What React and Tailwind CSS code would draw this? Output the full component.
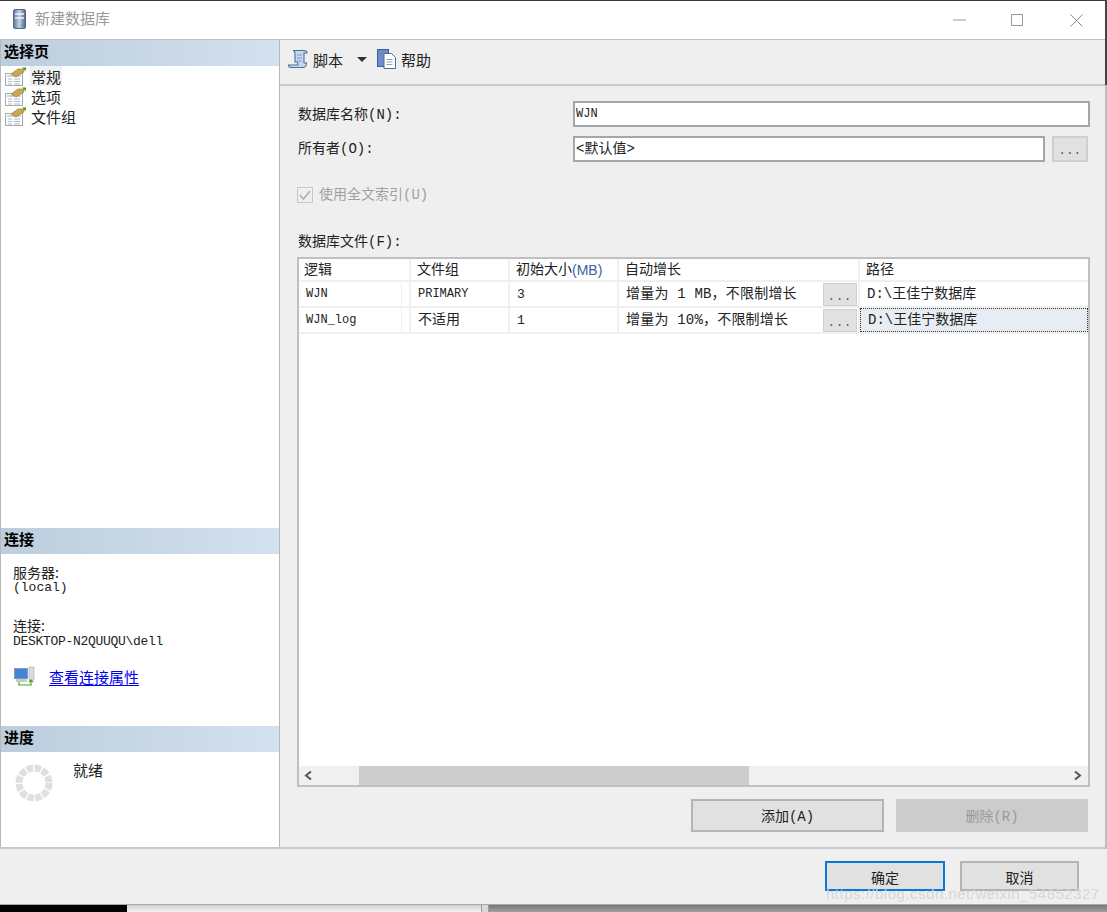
import React from "react";

const cjk = "font-['Liberation_Mono','Noto_Sans_CJK_SC',monospace]";

function PageIcon() {
  return (
    <svg width="21" height="19" viewBox="0 0 21 19" className="shrink-0">
      <rect x="0.5" y="6.5" width="17" height="12" fill="#fff" stroke="#a9a9a9" />
      <rect x="2" y="8" width="14" height="2" fill="#c4d2e8" />
      <path d="M3 12h4M9 12h6M3 14.5h4M9 14.5h6M3 17h4M9 17h6" stroke="#aab8cc" />
      <path d="M6 7 L13 2 L19 2 L19 5 L11 10 Z" fill="#c9a94a" stroke="#8c7a35" strokeWidth="0.6" />
      <path d="M17 0.5h4v3.500z" fill="#3a9b35" />
    </svg>
  );
}

function SectionHeader({ children }) {
  return (
    <div className="h-[26px] shrink-0 pl-[3px] pb-[6px] flex items-center bg-gradient-to-r from-[#bccddd] to-[#d4e1ee] text-[15px] leading-none font-bold text-black font-['Noto_Sans_CJK_SC',sans-serif]">
      {children}
    </div>
  );
}

function Spinner() {
  return (
    <svg width="38" height="38" viewBox="0 0 38 38" className="shrink-0">
      <circle cx="19" cy="19" r="15" fill="none" stroke="#e0e0e0" strokeWidth="7" strokeDasharray="6.4 1.454" />
    </svg>
  );
}

function Cell({ w, className = "", children }) {
  return <div className={`shrink-0 flex items-center border-r-2 border-[#f0f0f0] ${className}`} style={{ width: w }}>{children}</div>;
}

const colW = [112, 99, 109, 241, 231];

function Row({ name, group, size, growth, highlighted }) {
  return (
    <div className="flex h-[26px] border-b-2 border-[#f0f0f0] text-[14px] leading-none text-[#222]">
      <Cell w={colW[0]} className="pl-[7px] relative">
        <span className="text-[12px]">{name}</span>
        <span className="absolute right-[7px] top-0 bottom-0 w-px bg-[#f0f0f0]" />
      </Cell>
      <Cell w={colW[1]} className="pl-[7px]"><span className={group === "PRIMARY" ? "text-[12px]" : ""}>{group}</span></Cell>
      <Cell w={colW[2]} className="pl-[7px]"><span className="text-[13px]">{size}</span></Cell>
      <Cell w={colW[3]} className="pl-[7px] justify-between pr-[1px]">
        <span className="whitespace-nowrap text-[14px] tracking-[0.2px]">{growth}</span>
        <span className="w-[34px] h-[23px] bg-[#e1e1e1] border border-[#cfcfcf] flex items-end justify-center pb-[2px] text-[12px] tracking-[1px] leading-none text-[#555]">...</span>
      </Cell>
      <div
        className={`flex-1 flex items-center pl-[7px] ${highlighted ? "bg-[#e7edf3] border border-dotted border-[#333]" : ""}`}
      >
        <span className="whitespace-nowrap">D:\王佳宁数据库</span>
      </div>
    </div>
  );
}

export default function App() {
  return (
    <div className={`relative w-[1107px] h-[912px] overflow-hidden bg-[#efefef] flex flex-col ${cjk}`}>
      <div className="h-px shrink-0 bg-[#3a3a3a]" />
      {/* title bar */}
      <div className="h-[38px] shrink-0 bg-white flex items-center pl-[13px] border-b border-[#c0c0c0] box-content">
        <svg width="13" height="20" viewBox="0 0 13 20" className="shrink-0 mb-[2px]">
          <defs>
            <linearGradient id="db" x1="0" x2="1" y1="0" y2="0">
              <stop offset="0" stopColor="#5f7499" />
              <stop offset="0.5" stopColor="#c5d2e6" />
              <stop offset="1" stopColor="#4e6185" />
            </linearGradient>
          </defs>
          <rect x="0.5" y="0.5" width="12" height="19" rx="1.5" fill="url(#db)" stroke="#56688a" />
          <path d="M2 5h9M2 9h9" stroke="#eef3fb" strokeWidth="1.4" />
          <rect x="8" y="15" width="2" height="2" fill="#5fb35f" />
        </svg>
        <span className="ml-[9px] pb-[6px] text-[15px] leading-none text-[#999] font-['Noto_Sans_CJK_SC',sans-serif]">新建数据库</span>
        <div className="ml-auto flex items-center pr-[24px]">
          <svg width="13" height="2" viewBox="0 0 13 2" className="mr-[45px] -mt-[1px]"><path d="M0 1h13" stroke="#9a9a9a" /></svg>
          <svg width="12" height="12" viewBox="0 0 12 12" className="mr-[47px]"><rect x="0.5" y="0.5" width="11" height="11" fill="none" stroke="#999" /></svg>
          <svg width="13" height="13" viewBox="0 0 13 13"><path d="M0.5 0.5l12 12M12.5 0.5l-12 12" stroke="#8a8a8a" /></svg>
        </div>
      </div>

      {/* main */}
      <div className="flex h-[809px] shrink-0 border-b-2 border-[#c8c8d0]">
        {/* left */}
        <aside className="w-[280px] shrink-0 flex flex-col bg-white border-r border-l border-[#b8b8b8] font-['Noto_Sans_CJK_SC',sans-serif] text-[#222]">
          <SectionHeader>选择页</SectionHeader>
          <div className="h-[462px] shrink-0 pl-[4px] flex flex-col text-[15px] leading-none">
            {["常规", "选项", "文件组"].map((t, i) => (
              <div key={t} className="h-[20px] flex items-center gap-[4px]">
                <PageIcon />
                <span className={i === 0 ? "bg-[#f0f0f0] h-[20px] px-[1px] flex items-center" : "px-[1px]"}>{t}</span>
              </div>
            ))}
          </div>
          <SectionHeader>连接</SectionHeader>
          <div className="h-[172px] shrink-0 pl-[12px] pt-[11px] flex flex-col text-[14px] leading-none">
            <span className="h-[15px]">服务器:</span>
            <span className="text-[13px] font-['Liberation_Mono',monospace] mt-[1px]">(local)</span>
            <span className="mt-[24px] h-[15px]">连接:</span>
            <span className="text-[13px] mt-[2px] font-['Liberation_Mono',monospace] tracking-[-0.3px]">DESKTOP-N2QUUQU\dell</span>
            <div className="flex items-center mt-[18px] pl-[1px]">
              <svg width="21" height="20" viewBox="0 0 21 20" className="shrink-0">
                <rect x="0.5" y="2.5" width="13" height="10" fill="#3f86d6" stroke="#8a9bb0" />
                <rect x="2" y="13" width="11" height="3" fill="#c5cbd3" />
                <rect x="15" y="1" width="5" height="13" fill="#d9dde3" stroke="#a4abb5" strokeWidth="0.6" />
                <path d="M5 16v3h12v-5M15 16l2-2 2 2" fill="none" stroke="#3faa1d" strokeWidth="1.2" />
              </svg>
              <a href="#" className="ml-[14px] text-[15px] text-[#0000ee] underline underline-offset-2">查看连接属性</a>
            </div>
          </div>
          <SectionHeader>进度</SectionHeader>
          <div className="flex-1 pl-[14px] pt-[12px] flex items-start">
            <Spinner />
            <span className="ml-[20px] text-[15px] leading-none -mt-[2px]">就绪</span>
          </div>
        </aside>

        {/* right */}
        <main className="flex-1 min-w-0 flex flex-col">
          <div className="h-[46px] shrink-0 flex items-center pl-[8px] pb-[6px] border-b-2 border-[#c8c8d0] text-[15px] leading-none text-[#222] font-['Noto_Sans_CJK_SC',sans-serif]">
            <svg width="21" height="21" viewBox="0 0 21 21" className="shrink-0">
              <path d="M5 1.500h11c2 0 3 1 3 2.500h-3v10h2.500c0 2.500-1.500 4.500-3.500 4.500H3c-1.500 0-2.500-1-2.500-2.500H10c0-1.500 0-2-1-3H7V5C7 3 6.500 1.500 5 1.500z" fill="#c5d8f0" stroke="#4f6f96" strokeWidth="1.1" />
              <path d="M9 6h5M9 9h5M9 12h5" stroke="#7f9abb" />
            </svg>
            <span className="ml-[4px]">脚本</span>
            <svg width="10" height="5" viewBox="0 0 10 5" className="ml-[14px]"><path d="M0 0h10L5 5z" fill="#333" /></svg>
            <svg width="20" height="20" viewBox="0 0 20 20" className="ml-[10px] shrink-0">
              <rect x="0.500" y="0.500" width="11" height="17" fill="#6f8cc9" stroke="#3e5c9a" />
              <path d="M7 4.500h7.500l4 4v11H7z" fill="#fff" stroke="#4d6b9f" />
              <path d="M9.500 10.500h6M9.500 13h6M9.500 15.500h6" stroke="#8ea3c4" />
            </svg>
            <span className="ml-[4px]">帮助</span>
          </div>

          <div className="flex-1 min-h-0 pl-[18px] pr-[17px] flex flex-col text-[14px] leading-none text-[#222]">
            <div className="flex items-center mt-[15px] h-[26px]">
              <label className="w-[275px] shrink-0 pt-[2px]">数据库名称(N):</label>
              <div className="flex-1 h-[26px] bg-white border-2 border-[#a6a6a6] flex items-center pl-[1px] text-[12px] text-[#222]">WJN</div>
            </div>
            <div className="flex items-center mt-[9px] h-[26px]">
              <label className="w-[275px] shrink-0">所有者(O):</label>
              <div className="w-[472px] h-[26px] bg-white border-2 border-[#a6a6a6] flex items-center pl-[1px] text-[14px] text-[#222]">&lt;默认值&gt;</div>
              <div className="ml-[7px] w-[36px] h-[26px] bg-[#e1e1e1] border-2 border-[#cfcfcf] flex items-end justify-center pb-[3px] text-[12px] tracking-[0.5px] text-[#555]">...</div>
            </div>
            <div className="flex items-center mt-[24px] h-[18px] text-[#a0a0a0] -ml-px">
              <svg width="16" height="16" viewBox="0 0 16 16" className="shrink-0">
                <rect x="0.500" y="0.500" width="15" height="15" fill="#efefef" stroke="#c8c8c8" />
                <path d="M3 8l3.500 4L13 4" fill="none" stroke="#b0b0b0" strokeWidth="1.600" />
              </svg>
              <span className="ml-[6px]">使用全文索引(U)</span>
            </div>
            <div className="mt-[31px] h-[15px]">数据库文件(F):</div>
            <div className="mt-[7px] -ml-px w-[793px] h-[530px] bg-white border-2 border-[#c0c0c0] flex flex-col">
              <div className="flex-1 min-h-0">
                <div className="flex h-[23px] border-b-2 border-[#f0f0f0] text-[14px]">
                  {["逻辑", "文件组", "初始大小", "自动增长", "路径"].map((h, i) => (
                    <div key={h} className={`shrink-0 flex items-center border-r-2 border-[#f0f0f0] last:border-r-0 ${i === 0 ? "pl-[5px]" : "pl-[6px]"}`} style={{ width: colW[i] }}>
                      {h}
                      {i === 2 && <span className="text-[#3b5f9f] text-[14px] font-['Liberation_Sans',sans-serif]">(MB)</span>}
                    </div>
                  ))}
                </div>
                <Row name="WJN" group="PRIMARY" size="3" growth="增量为 1 MB，不限制增长" />
                <Row name="WJN_log" group="不适用" size="1" growth="增量为 10%，不限制增长" highlighted />
              </div>
              <div className="h-[19px] shrink-0 bg-[#f0f0f0] flex items-center relative">
                <svg width="9" height="9" viewBox="0 0 9 9" className="ml-[5px] shrink-0"><path d="M7 0.500L2 4.500l5 4" fill="none" stroke="#555" strokeWidth="2" /></svg>
                <div className="ml-[46px] w-[390px] h-[19px] bg-[#cdcdcd]" />
                <svg width="9" height="9" viewBox="0 0 9 9" className="ml-auto mr-[6px] shrink-0"><path d="M2 0.500l5 4-5 4" fill="none" stroke="#555" strokeWidth="2" /></svg>
              </div>
            </div>
            <div className="flex justify-end -ml-px w-[793px] gap-[12px] mt-[12px]">
              <div className="w-[193px] h-[33px] pt-[2px] bg-[#e1e1e1] border-2 border-[#b4b4b4] flex items-center justify-center text-[14px]">添加(A)</div>
              <div className="w-[192px] h-[33px] pt-[2px] bg-[#cccccc] flex items-center justify-center text-[14px] text-[#9a9a9a] mr-[2px]">删除(R)</div>
            </div>
          </div>
        </main>
      </div>

      {/* footer */}
      <div className="h-[55px] shrink-0 flex items-start justify-end pr-[28px] pt-[12px] gap-[15px] text-[14px] leading-none text-[#222]">
        <div className="w-[120px] h-[30px] pt-[5px] bg-[#e1e1e1] border-2 border-[#0a78d7] flex items-center justify-center">确定</div>
        <div className="w-[119px] h-[30px] pt-[5px] bg-[#e1e1e1] border-2 border-[#b4b4b4] flex items-center justify-center">取消</div>
      </div>

      {/* taskbar remnant */}
      <div className="flex-1 flex border-t border-[#a8a8a8]">
        <div className="w-[127px] bg-black" />
        <div className="w-[354px] bg-gradient-to-b from-[#cfcfcf] to-[#f4f4f4]" />
        <div className="w-[8px] bg-[#d8d8d8] border-x border-[#999]" />
        <div className="flex-1 bg-gradient-to-b from-[#777] to-[#a0a0a0]" />
      </div>

      {/* watermark + right edge */}
      <span className="absolute left-[826px] top-[886px] text-[15px] leading-none tracking-[0.5px] text-[#d4d4d4]/90 font-['Liberation_Sans',sans-serif] whitespace-nowrap">https://blog.csdn.net/weixin_54852327</span>
      <div className="absolute right-0 top-0 w-[2px] h-[85px] bg-[#444]" />
      <div className="absolute right-0 top-[85px] w-[2px] h-[764px] bg-[#bdbdbd]" />
    </div>
  );
}
